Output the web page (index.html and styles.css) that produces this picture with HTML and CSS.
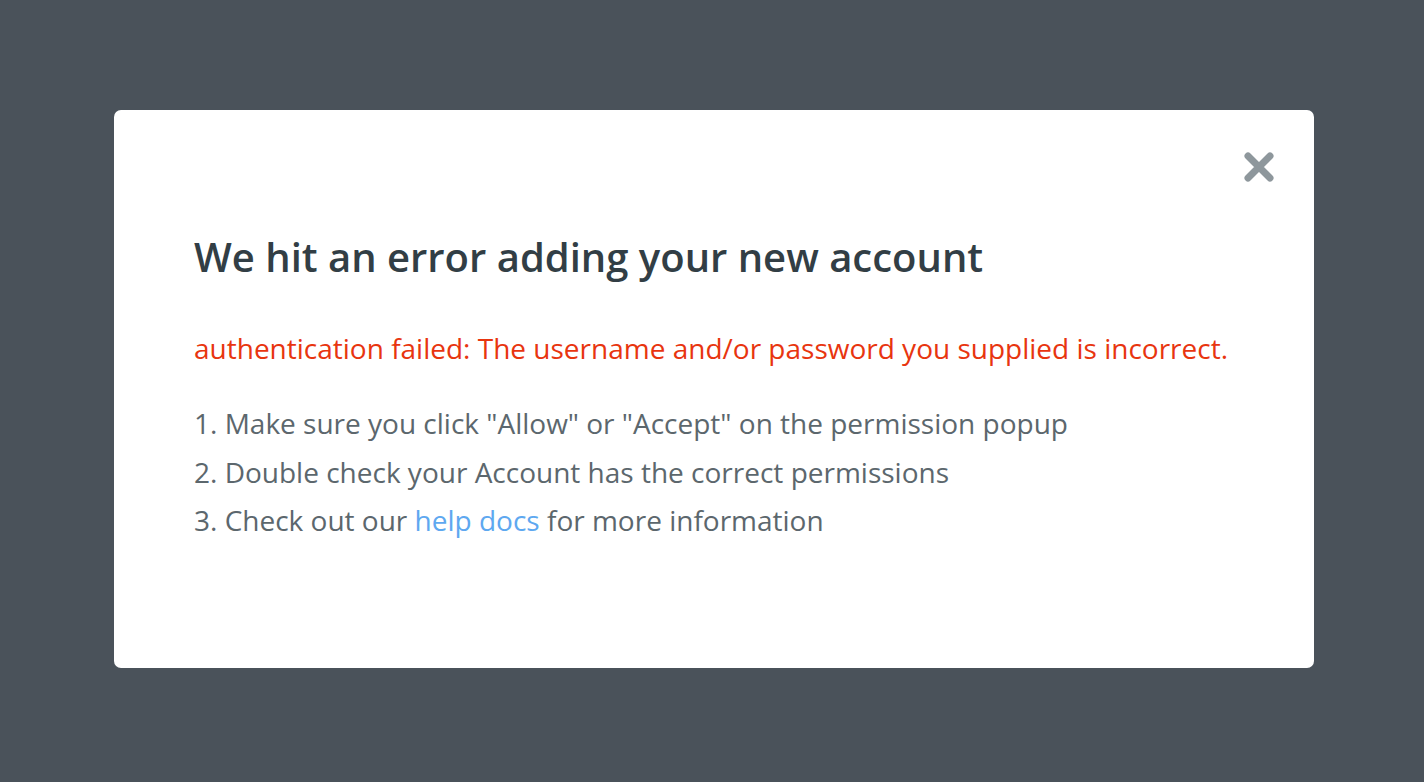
FILE: index.html
```html
<!DOCTYPE html>
<html lang="en">
<head>
<meta charset="utf-8">
<title>Error</title>
<link rel="stylesheet" href="styles.css">
</head>
<body>
<div class="overlay">
  <div class="modal">
    <button class="close" aria-label="Close">
      <svg width="32" height="32" viewBox="0 0 32 32"><path d="M5 5 L27 27 M27 5 L5 27" stroke="#8e979c" stroke-width="7" stroke-linecap="round" fill="none"/></svg>
    </button>
    <h1 class="title">We hit an error adding your new account</h1>
    <p class="error">authentication failed: The username and/or password you supplied is incorrect.</p>
    <ol class="steps">
      <li>1. Make sure you click "Allow" or "Accept" on the permission popup</li>
      <li>2. Double check your Account has the correct permissions</li>
      <li>3. Check out our <a href="#" class="link">help docs</a> for more information</li>
    </ol>
  </div>
</div>
</body>
</html>
```

FILE: styles.css
```css
html, body {
  margin: 0;
  padding: 0;
  height: 100%;
}
body {
  background: #4a525a;
  font-family: "Open Sans", "Noto Sans", sans-serif;
}
.overlay {
  padding: 110px 0 0 114px;
}
.modal {
  position: relative;
  width: 1200px;
  box-sizing: border-box;
  height: 558px;
  background: #ffffff;
  border-radius: 7px;
  padding: 123px 80px 0 80px;
}
.close {
  position: absolute;
  top: 41px;
  right: 39px;
  width: 32px;
  height: 32px;
  padding: 0;
  border: 0;
  background: none;
  cursor: pointer;
}
.close svg { display: block; }
.title {
  margin: 0;
  font-size: 40px;
  line-height: 48px;
  font-weight: 600;
  color: #323e45;
}
.error {
  margin: 51px 0 0 0;
  font-size: 28px;
  line-height: 32px;
  color: #e8350f;
}
.steps {
  list-style: none;
  margin: 35px 0 0 0;
  padding: 0;
  font-size: 28px;
  line-height: 48.5px;
  color: #5c676d;
}
.link {
  color: #5ea8f0;
  text-decoration: none;
}
```
